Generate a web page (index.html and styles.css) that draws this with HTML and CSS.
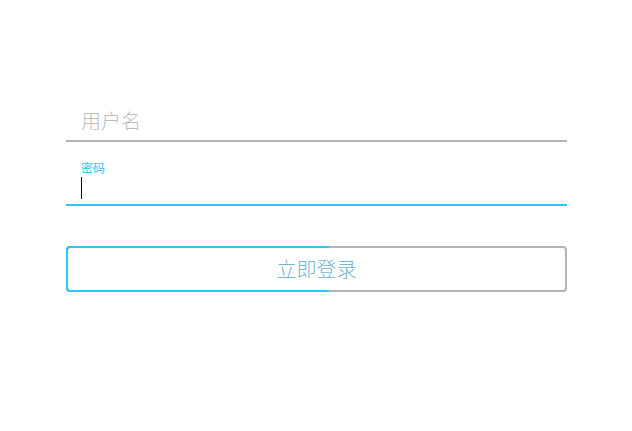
FILE: index.html
```html
<!DOCTYPE html>
<html lang="zh-CN">
<head>
<meta charset="utf-8">
<title>登录</title>
<link rel="stylesheet" href="styles.css">
</head>
<body>
<form class="login">
  <div class="field field-user">
    <span class="placeholder">用户名</span>
  </div>
  <div class="field field-pass">
    <label class="label">密码</label>
    <div class="input-row"><span class="caret"></span></div>
  </div>
  <button type="button" class="submit">立即登录</button>
</form>
</body>
</html>
```
FILE: styles.css
```css
html, body {
  margin: 0;
  padding: 0;
  background: #ffffff;
}
body {
  font-family: "Noto Sans CJK SC", "Noto Sans", sans-serif;
}
.login {
  width: 501px;
  margin: 100px 0 0 66px;
  display: flex;
  flex-direction: column;
}
.field {
  box-sizing: border-box;
  padding-left: 15px;
  border-bottom: 2px solid #b3b3b3;
}
.field-user {
  height: 42px;
  display: flex;
  align-items: center;
}
.placeholder {
  font-size: 20px;
  font-weight: 300;
  line-height: 24px;
  color: #bdbdbd;
  padding-top: 2px;
}
.field-pass {
  padding-top: 19px;
  border-bottom-color: #2bc6f2;
}
.label {
  display: block;
  font-size: 12px;
  line-height: 14px;
  color: #2bc6f2;
}
.input-row {
  height: 29px;
  display: flex;
  align-items: flex-start;
}
.caret {
  width: 1px;
  height: 22px;
  margin-top: 2px;
  background: #000000;
}
.submit {
  position: relative;
  box-sizing: border-box;
  margin-top: 40px;
  height: 46px;
  width: 100%;
  padding: 0 0 2px;
  border: 2px solid #b3b3b3;
  border-radius: 4px;
  background: #ffffff;
  font-family: "Noto Sans CJK SC", "Noto Sans", sans-serif;
  font-size: 20px;
  font-weight: 300;
  color: #72b4d6;
}
.submit::before {
  content: "";
  position: absolute;
  left: -2px;
  top: -2px;
  bottom: -2px;
  width: 263px;
  box-sizing: border-box;
  border: 2px solid #2bc6f2;
  border-right: none;
  border-radius: 4px 0 0 4px;
  pointer-events: none;
}
```
